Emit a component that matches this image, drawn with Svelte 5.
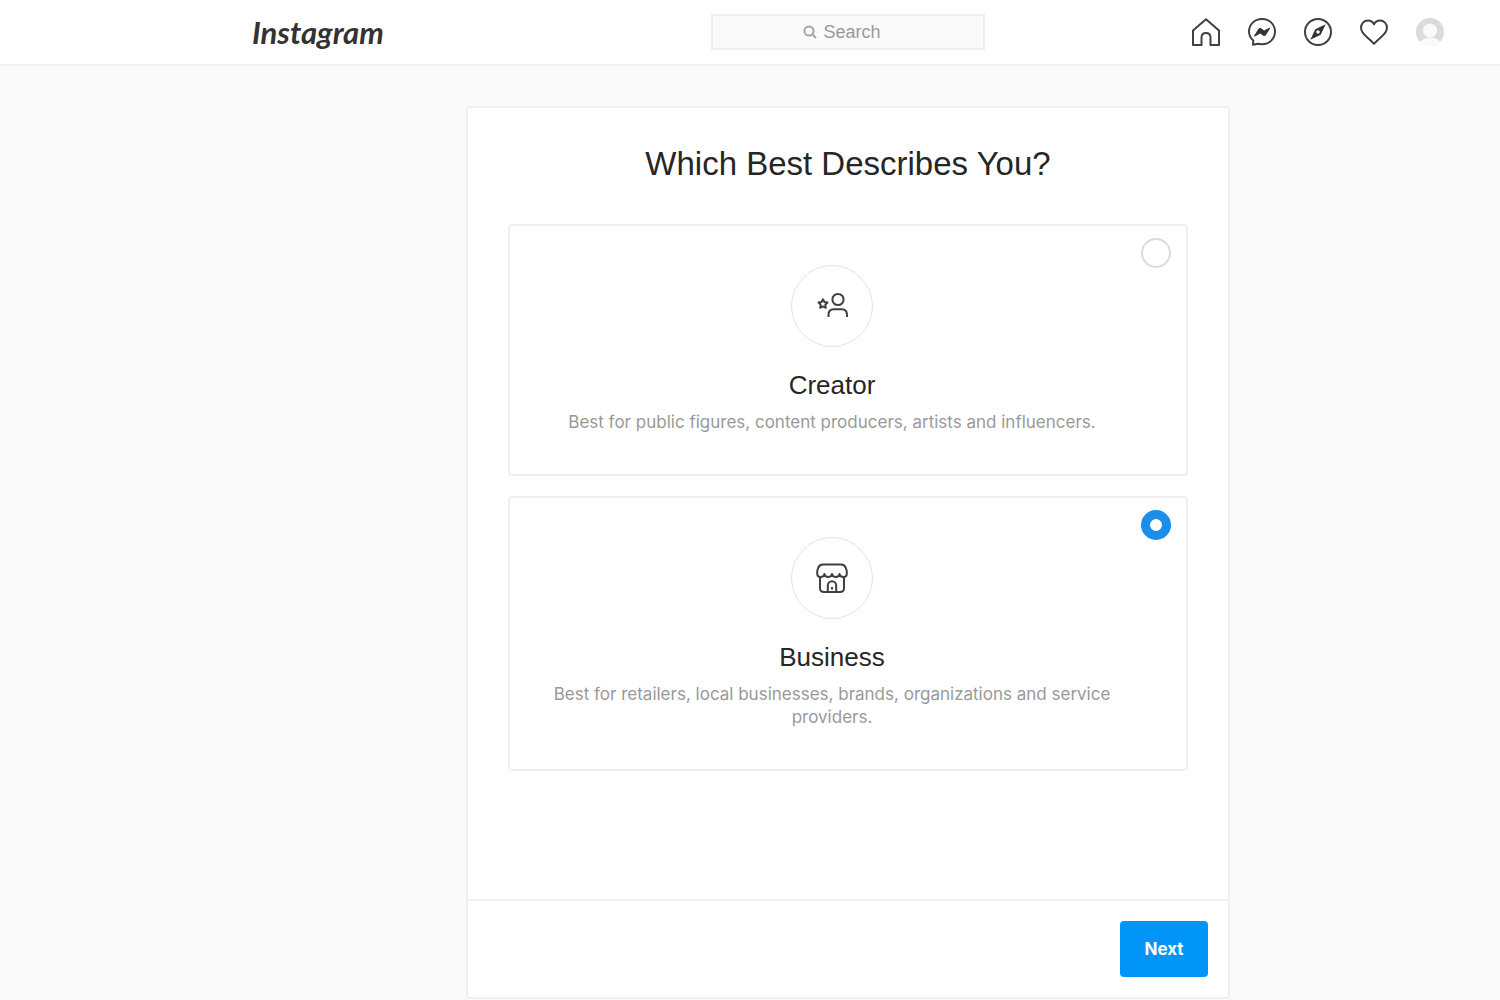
<script lang="ts">
  type AccountType = 'creator' | 'business';

  const options: { id: AccountType; title: string; text: string }[] = [
    {
      id: 'creator',
      title: 'Creator',
      text: 'Best for public figures, content producers, artists and influencers.'
    },
    {
      id: 'business',
      title: 'Business',
      text: 'Best for retailers, local businesses, brands, organizations and service providers.'
    }
  ];

  let selected: AccountType = $state('business');
  let query = $state('');
</script>

<div class="page">
  <header class="topbar">
    <div class="topbar-inner">
      <a class="logo" href="/">Instagram</a>

      <label class="search">
        <svg viewBox="0 0 14 14" aria-hidden="true">
          <circle cx="6" cy="6" r="4.6" />
          <path d="M9.4 9.4 13 13" />
        </svg>
        <input type="text" placeholder="Search" aria-label="Search" bind:value={query} />
      </label>

      <nav class="nav">
        <a href="/" aria-label="Home">
          <svg viewBox="0 0 28 28">
            <path d="M14 1.2 1 12.6V27h8.500v-7.400c0-2.800 1.700-4.600 4.500-4.600s4.500 1.800 4.500 4.600V27H27V12.6Z" />
          </svg>
        </a>
        <a href="/direct" aria-label="Messages">
          <svg viewBox="0 0 28 28">
            <path d="M14 1C6.600 1 1 6.400 1 13.600c0 3.800 1.700 6.700 4.300 8.900L5 26.800l5-1c1.300.3 2.600.4 4 .4 7.400 0 13-5.400 13-12.600S21.400 1 14 1Z" />
            <path class="solid" d="m6.200 17.600 4.200-6.600c.7-1 2-1.300 3-.5l2.700 2.100 5.200-2.800c.6-.3 1.100.3.800.8L17.900 17c-.7 1-2 1.300-3 .5l-2.700-2-5.200 2.900c-.6.3-1.100-.3-.8-.8Z" />
          </svg>
        </a>
        <a href="/explore" aria-label="Explore">
          <svg viewBox="0 0 28 28">
            <circle cx="14" cy="14" r="13" />
            <path class="solid" d="m21.700 6.300-5 10.400-10.400 5 5-10.400ZM14 12.200a1.800 1.800 0 1 0 0 3.600 1.800 1.800 0 0 0 0-3.600Z" />
          </svg>
        </a>
        <a href="/activity" aria-label="Activity">
          <svg viewBox="0 0 28 28">
            <path d="M20 2.500c-2.700 0-4.600 1.300-6 3.700-1.400-2.400-3.300-3.700-6-3.700-4 0-7 3.100-7 7.300 0 4 2.400 6.300 6 9.400 2.900 2.400 5 4.300 7 6.600 2-2.300 4.100-4.200 7-6.600 3.600-3.100 6-5.400 6-9.400 0-4.200-3-7.300-7-7.300Z" />
          </svg>
        </a>
        <a href="/profile" aria-label="Profile">
          <svg class="avatar" viewBox="0 0 28 28">
            <circle class="avatar-back" cx="14" cy="14" r="14" />
            <circle class="avatar-body" cx="14" cy="12.500" r="7" />
            <path class="avatar-body" d="M4 24c2-3 6-4.500 10-4.500S22 21 24 24c-3 2.700-6 4-10 4s-7-1.300-10-4Z" />
          </svg>
        </a>
      </nav>
    </div>
  </header>

  <main>
    <form class="card" onsubmit={(event) => event.preventDefault()}>
      <div class="card-body">
        <h1>Which Best Describes You?</h1>

        {#each options as option (option.id)}
          <label class="option">
            <span class="option-content">
              <span class="option-icon">
                {#if option.id === 'creator'}
                  <svg viewBox="0 0 32 32" aria-hidden="true">
                    <circle cx="22" cy="9.500" r="5.600" />
                    <path d="M12.500 27v-2c0-3.500 1.800-5.700 5-5.700h8.500c3.200 0 5 2.200 5 5.700v2" />
                    <path d="m7 9.300 1.400 2.700 3.100.5-2.200 2.200.5 3.100L7 16.400l-2.800 1.400.5-3.100-2.200-2.200 3.100-.5Z" />
                  </svg>
                {:else}
                  <svg viewBox="0 0 32 32" aria-hidden="true">
                    <path d="M7 2.500h18c2.500 0 4 1 4.800 3.300l1 3.400v2.300c0 2-1.500 3.500-3.500 3.500s-3.500-1.300-3.700-3c-.3 1.700-1.800 3-3.800 3s-3.500-1.300-3.800-3c-.3 1.700-1.800 3-3.800 3s-3.500-1.300-3.800-3c-.2 1.700-1.700 3-3.700 3s-3.500-1.500-3.500-3.500V9.200l1-3.400C3 3.500 4.500 2.500 7 2.500Z" />
                    <path d="M4 15v11c0 2.600 1.500 4 4 4h16c2.500 0 4-1.400 4-4V15" />
                    <path d="M11.800 30v-6.500a4.200 4.200 0 0 1 8.400 0V30" />
                    <path d="M16 25v2.500" />
                  </svg>
                {/if}
              </span>
              <span class="option-title">{option.title}</span>
              <span class="option-text">{option.text}</span>
            </span>
            <input type="radio" name="account-type" value={option.id} bind:group={selected} />
          </label>
        {/each}
      </div>

      <footer class="card-footer">
        <button class="next" type="submit">Next</button>
      </footer>
    </form>
  </main>
</div>

<style>
  :global(body) {
    margin: 0;
    background: #fafafa;
  }

  .page {
    font-family: 'Liberation Sans', Arial, sans-serif;
    color: #262626;
  }

  .topbar {
    box-sizing: border-box;
    padding-left: 196px;
    background: #fff;
    border-bottom: 2px solid #efefef;
  }

  .topbar-inner {
    display: grid;
    grid-template-columns: 1fr 274px 1fr;
    align-items: center;
    max-width: 1192px;
    height: 64px;
    margin: 0 auto;
  }

  .logo {
    justify-self: start;
    font-family: Lato, sans-serif;
    font-size: 31px;
    font-style: italic;
    font-weight: 700;
    line-height: 40px;
    color: #333;
    text-decoration: none;
  }

  .search {
    box-sizing: border-box;
    display: flex;
    align-items: center;
    justify-content: center;
    gap: 6px;
    height: 36px;
    padding-right: 12px;
    background: #fafafa;
    border: 2px solid #efefef;
    cursor: text;
  }

  .search svg {
    width: 14px;
    height: 14px;
    fill: none;
    stroke: #a6a6a6;
    stroke-width: 2;
  }

  .search input {
    field-sizing: content;
    appearance: none;
    padding: 0;
    border: 0;
    outline: 0;
    background: transparent;
    color: #262626;
    font: inherit;
    font-size: 18px;
    line-height: 24px;
  }

  .search input::placeholder {
    color: #999;
    opacity: 1;
  }

  .nav {
    display: flex;
    justify-self: end;
    gap: 28px;
  }

  .nav a {
    display: flex;
  }

  .nav svg {
    width: 28px;
    height: 28px;
    fill: none;
    stroke: #404040;
    stroke-width: 2;
    stroke-linejoin: round;
  }

  .nav .solid {
    fill: #333;
    fill-rule: evenodd;
    stroke: none;
  }

  .nav .avatar {
    stroke: none;
  }

  .avatar-back {
    fill: #dbdbdb;
  }

  .avatar-body {
    fill: #fafafa;
  }

  main {
    padding: 40px 0 0 196px;
  }

  .card {
    box-sizing: border-box;
    max-width: 764px;
    margin: 0 auto;
    background: #fff;
    border: 2px solid #efefef;
    border-radius: 4px;
  }

  .card-body {
    display: flex;
    flex-direction: column;
    gap: 20px;
    padding: 32px 40px 128px;
  }

  h1 {
    margin: 0 0 16px;
    font-size: 33px;
    font-weight: 400;
    line-height: 48px;
    text-align: center;
  }

  .option {
    display: flex;
    align-items: flex-start;
    padding: 12px 15px 12px 13px;
    border: 2px solid #efefef;
    border-radius: 4px;
    cursor: pointer;
  }

  .option-content {
    flex: 1;
    display: flex;
    flex-direction: column;
    align-items: center;
    padding: 27px 24px 28px;
    text-align: center;
  }

  .option-icon {
    box-sizing: border-box;
    display: flex;
    align-items: center;
    justify-content: center;
    width: 82px;
    height: 82px;
    border: 1px solid #e2e2e2;
    border-radius: 50%;
  }

  .option-icon svg {
    width: 32px;
    height: 32px;
    fill: none;
    stroke: #404040;
    stroke-width: 2;
    stroke-linejoin: round;
  }

  .option-title {
    margin-top: 20px;
    font-size: 26px;
    line-height: 36px;
  }

  .option-text {
    margin-top: 8px;
    color: #999;
    font-family: Inter, sans-serif;
    font-size: 17px;
    line-height: 23px;
  }

  .option input {
    appearance: none;
    box-sizing: border-box;
    width: 30px;
    height: 30px;
    margin: 0;
    background: #fff;
    border: 2px solid #dbdbdb;
    border-radius: 50%;
    cursor: pointer;
  }

  .option input:checked {
    border: 9px solid #1a8ee8;
  }

  .card-footer {
    display: flex;
    justify-content: flex-end;
    padding: 20px;
    border-top: 2px solid #efefef;
  }

  .next {
    min-width: 88px;
    height: 56px;
    padding: 0 20px;
    background: #0095f6;
    border: 0;
    border-radius: 4px;
    color: #fff;
    font-family: Inter, sans-serif;
    font-size: 17px;
    font-weight: 700;
    cursor: pointer;
  }
</style>
